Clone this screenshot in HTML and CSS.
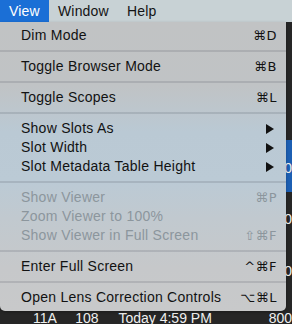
FILE: index.html
```html
<!DOCTYPE html>
<html>
<head>
<meta charset="utf-8">
<link rel="stylesheet" href="styles.css">
</head>
<body>
<div class="screen">
  <div class="menubar">
    <span class="mb-item active">View</span>
    <span class="mb-item">Window</span>
    <span class="mb-item">Help</span>
  </div>
  <div class="app">
    <div class="spacer"></div>
    <div class="row selected"><span class="c1"></span><span class="c2"></span><span class="c3"></span><span class="c4">800</span></div>
    <div class="row"><span class="c1"></span><span class="c2"></span><span class="c3"></span><span class="c4">800</span></div>
    <div class="row"><span class="c1"></span><span class="c2"></span><span class="c3"></span><span class="c4">800</span></div>
    <div class="row last"><span class="c1">11A</span><span class="c2">108</span><span class="c3">Today 4:59 PM</span><span class="c4">800</span></div>
  </div>
  <div class="menu">
    <div class="item"><span class="label">Dim Mode</span><span class="key">⌘D</span></div>
    <div class="sep"></div>
    <div class="item"><span class="label">Toggle Browser Mode</span><span class="key">⌘B</span></div>
    <div class="sep"></div>
    <div class="item"><span class="label">Toggle Scopes</span><span class="key">⌘L</span></div>
    <div class="sep"></div>
    <div class="item"><span class="label">Show Slots As</span><svg class="arrow" width="8" height="10" viewBox="0 0 8 10"><path d="M0 0 L8 5 L0 10 Z" fill="#111"/></svg></div>
    <div class="item"><span class="label">Slot Width</span><svg class="arrow" width="8" height="10" viewBox="0 0 8 10"><path d="M0 0 L8 5 L0 10 Z" fill="#111"/></svg></div>
    <div class="item"><span class="label">Slot Metadata Table Height</span><svg class="arrow" width="8" height="10" viewBox="0 0 8 10"><path d="M0 0 L8 5 L0 10 Z" fill="#111"/></svg></div>
    <div class="sep"></div>
    <div class="item disabled"><span class="label">Show Viewer</span><span class="key">⌘P</span></div>
    <div class="item disabled"><span class="label">Zoom Viewer to 100%</span></div>
    <div class="item disabled"><span class="label">Show Viewer in Full Screen</span><span class="key">⇧⌘F</span></div>
    <div class="sep"></div>
    <div class="item"><span class="label">Enter Full Screen</span><span class="key">^⌘F</span></div>
    <div class="sep"></div>
    <div class="item"><span class="label">Open Lens Correction Controls</span><span class="key">⌥⌘L</span></div>
  </div>
</div>
</body>
</html>
```

FILE: styles.css
```css
* { box-sizing: border-box; }
html, body {
  margin: 0;
  padding: 0;
  background: #262626;
}
.screen {
  position: relative;
  width: 292px;
  height: 324px;
  overflow: hidden;
  font-family: "Liberation Sans", Arial, sans-serif;
  font-size: 14px;
}
.menubar {
  height: 22px;
  display: flex;
  background: #c8d2d5;
  color: #141414;
  letter-spacing: 0.2px;
}
.mb-item {
  padding: 0 9px;
  line-height: 22px;
}
.mb-item.active {
  background: #1b6fd6;
  color: #fff;
}
.app {
  display: flex;
  flex-direction: column;
  color: #f0f0f0;
  font-size: 14px;
}
.spacer { height: 118px; }
.row {
  height: 52px;
  display: flex;
  padding-top: 19px;
  line-height: 16px;
}
.row.selected { background: #1c5fb3; padding-top: 20px; }
.row.last { padding-top: 14px; }
.c1 { margin-left: 33px; width: 43px; }
.c2 { width: 44px; }
.c3 { width: 153px; }

.menu {
  position: absolute;
  left: 0;
  top: 22px;
  width: 286px;
  height: 289px;
  padding: 4px 0;
  border-radius: 0 0 5px 5px;
  background: linear-gradient(180deg, #c1c3c4 0%, #c0c3c5 22%, #bac9d4 38%, #bbcad5 55%, #c1c9cf 68%, #c6c8ca 85%, #c8c9ca 100%);
  box-shadow: 0 1px 3px rgba(0,0,0,0.3);
  color: #121212;
}
.item {
  height: 19px;
  display: flex;
  align-items: center;
  justify-content: space-between;
  padding: 0 9px 0 21px;
  line-height: 19px;
}
.label { letter-spacing: 0.25px; }
.item.disabled { color: #8c969d; }
.key {
  font-family: "DejaVu Sans", "Liberation Sans", sans-serif;
  font-size: 13px;
  letter-spacing: 0.5px;
}
.arrow { margin-right: 3px; }
.sep {
  height: 12px;
  display: flex;
  align-items: center;
}
.sep::before {
  content: "";
  display: block;
  width: 100%;
  height: 2px;
  background: rgba(60, 70, 80, 0.16);
}
```
